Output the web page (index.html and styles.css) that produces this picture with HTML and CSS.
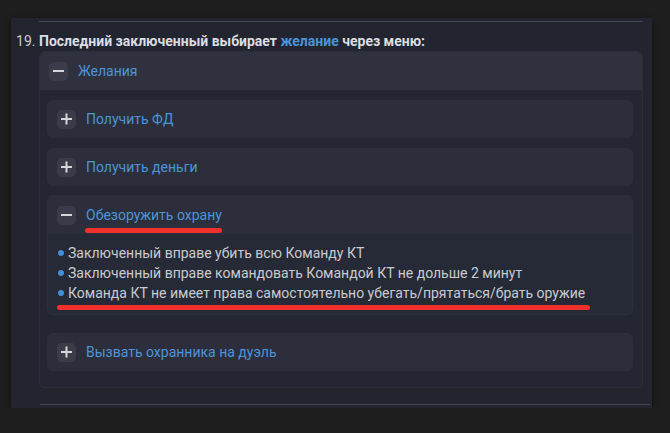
FILE: index.html
```html
<!doctype html>
<html>
    <head>
        <meta charset="utf-8">
        <title>Правила</title>
        <link rel="stylesheet" href="styles.css">
    </head>
    <body>
        <div class="post">
            <hr class="sep">
            <ol class="rules" start="19">
                <li>
                    <b>Последний заключенный выбирает <span class="link">желание</span> через меню:</b>
                    <div class="spoiler outer">
                        <div class="spoilerHead">
                            <span class="toggle minus"></span>
                            <span class="link">Желания</span>
                        </div>
                        <div class="spoilerBody">
                            <div class="spoiler">
                                <div class="spoilerHead">
                                    <span class="toggle plus"></span>
                                    <span class="link">Получить ФД</span>
                                </div>
                            </div>
                            <div class="spoiler">
                                <div class="spoilerHead">
                                    <span class="toggle plus"></span>
                                    <span class="link">Получить деньги</span>
                                </div>
                            </div>
                            <div class="spoiler open">
                                <div class="spoilerHead">
                                    <span class="toggle minus"></span>
                                    <span class="link">Обезоружить охрану</span>
                                </div>
                                <ul class="items">
                                    <li>Заключенный вправе убить всю Команду КТ</li>
                                    <li>Заключенный вправе командовать Командой КТ не дольше 2 минут</li>
                                    <li>Команда КТ не имеет права самостоятельно убегать/прятаться/брать оружие</li>
                                </ul>
                                <span class="mark markHead"></span>
                                <span class="mark markLast"></span>
                            </div>
                            <div class="spoiler last">
                                <div class="spoilerHead">
                                    <span class="toggle plus"></span>
                                    <span class="link">Вызвать охранника на дуэль</span>
                                </div>
                            </div>
                        </div>
                    </div>
                </li>
            </ol>
            <hr class="sep bottom">
        </div>
    </body>
</html>
```

FILE: styles.css
```css
body {
    margin: 0;
    padding: 18px 0 0 11px;
    background-color: #1e1e1f;
    font-family: Roboto, "Noto Sans", sans-serif;
    font-size: 14px;
    line-height: 20px;
    color: #c9cbd0;
}

.post {
    width: 641px;
    padding: 0 9px 3px 28px;
    background-color: #22252f;
    box-shadow: 0 2px 6px rgba(0, 0, 0, 0.5);
    box-sizing: border-box;
}

hr.sep {
    margin: 0;
    padding-top: 3px;
    border: 0;
    border-bottom: 1px solid #454854;
    height: 0;
}
hr.bottom {
    margin-top: 16px;
    margin-left: 1px;
    margin-right: -7px;
    padding-top: 0;
}

ol.rules {
    margin: 0;
    padding: 0;
}
ol.rules > li {
    padding-top: 9px;
}
ol.rules > li::marker {
    color: #c9cbd0;
}
ol.rules b {
    color: #dcdde1;
    font-weight: 700;
}

.link {
    color: #4c94d8;
}

.spoiler {
    background-color: #2b2e3a;
    border-radius: 6px;
    position: relative;
}
.spoiler.outer {
    width: 604px;
    background-color: #242733;
    border: 1px solid #2c2f3b;
    box-sizing: border-box;
}
.spoilerHead {
    display: flex;
    align-items: center;
    gap: 10px;
    height: 38px;
    padding-left: 10px;
    background-color: #2c2f3b;
    border-radius: 6px;
}
.outer > .spoilerHead {
    padding-left: 9px;
    border-radius: 5px 5px 0 0;
    background-color: #2f323e;
}

.toggle {
    width: 19px;
    height: 19px;
    border-radius: 5px;
    background-color: #3a3d49;
    position: relative;
    flex-shrink: 0;
}
.toggle::before,
.toggle.plus::after {
    content: "";
    position: absolute;
    left: 4px;
    top: 8px;
    width: 11px;
    height: 2px;
    background-color: #d6d7db;
}
.toggle.plus::after {
    transform: rotate(90deg);
}

.spoilerBody {
    display: flex;
    flex-direction: column;
    gap: 10px;
    padding: 10px 9px 16px 7px;
}
.spoiler.last {
    margin-top: 8px;
}

.spoiler.open {
    background-color: #262936;
    border: 1px solid #2d303c;
    margin-top: -1px;
}
.open > .spoilerHead {
    border-radius: 5px 5px 0 0;
    padding-left: 9px;
}

ul.items {
    margin: 0;
    padding: 9px 0 11px 20px;
    list-style: none;
}
ul.items li {
    position: relative;
}
ul.items li::before {
    content: "";
    position: absolute;
    left: -10px;
    top: 7px;
    width: 6px;
    height: 6px;
    border-radius: 50%;
    background-color: #3f8fd9;
}

.mark {
    position: absolute;
    height: 5px;
    border-radius: 3px;
    background-color: #f1302b;
}
.markHead {
    left: 37px;
    top: 32px;
    width: 137px;
}
.markLast {
    left: 9px;
    top: 109px;
    width: 533px;
}
```
